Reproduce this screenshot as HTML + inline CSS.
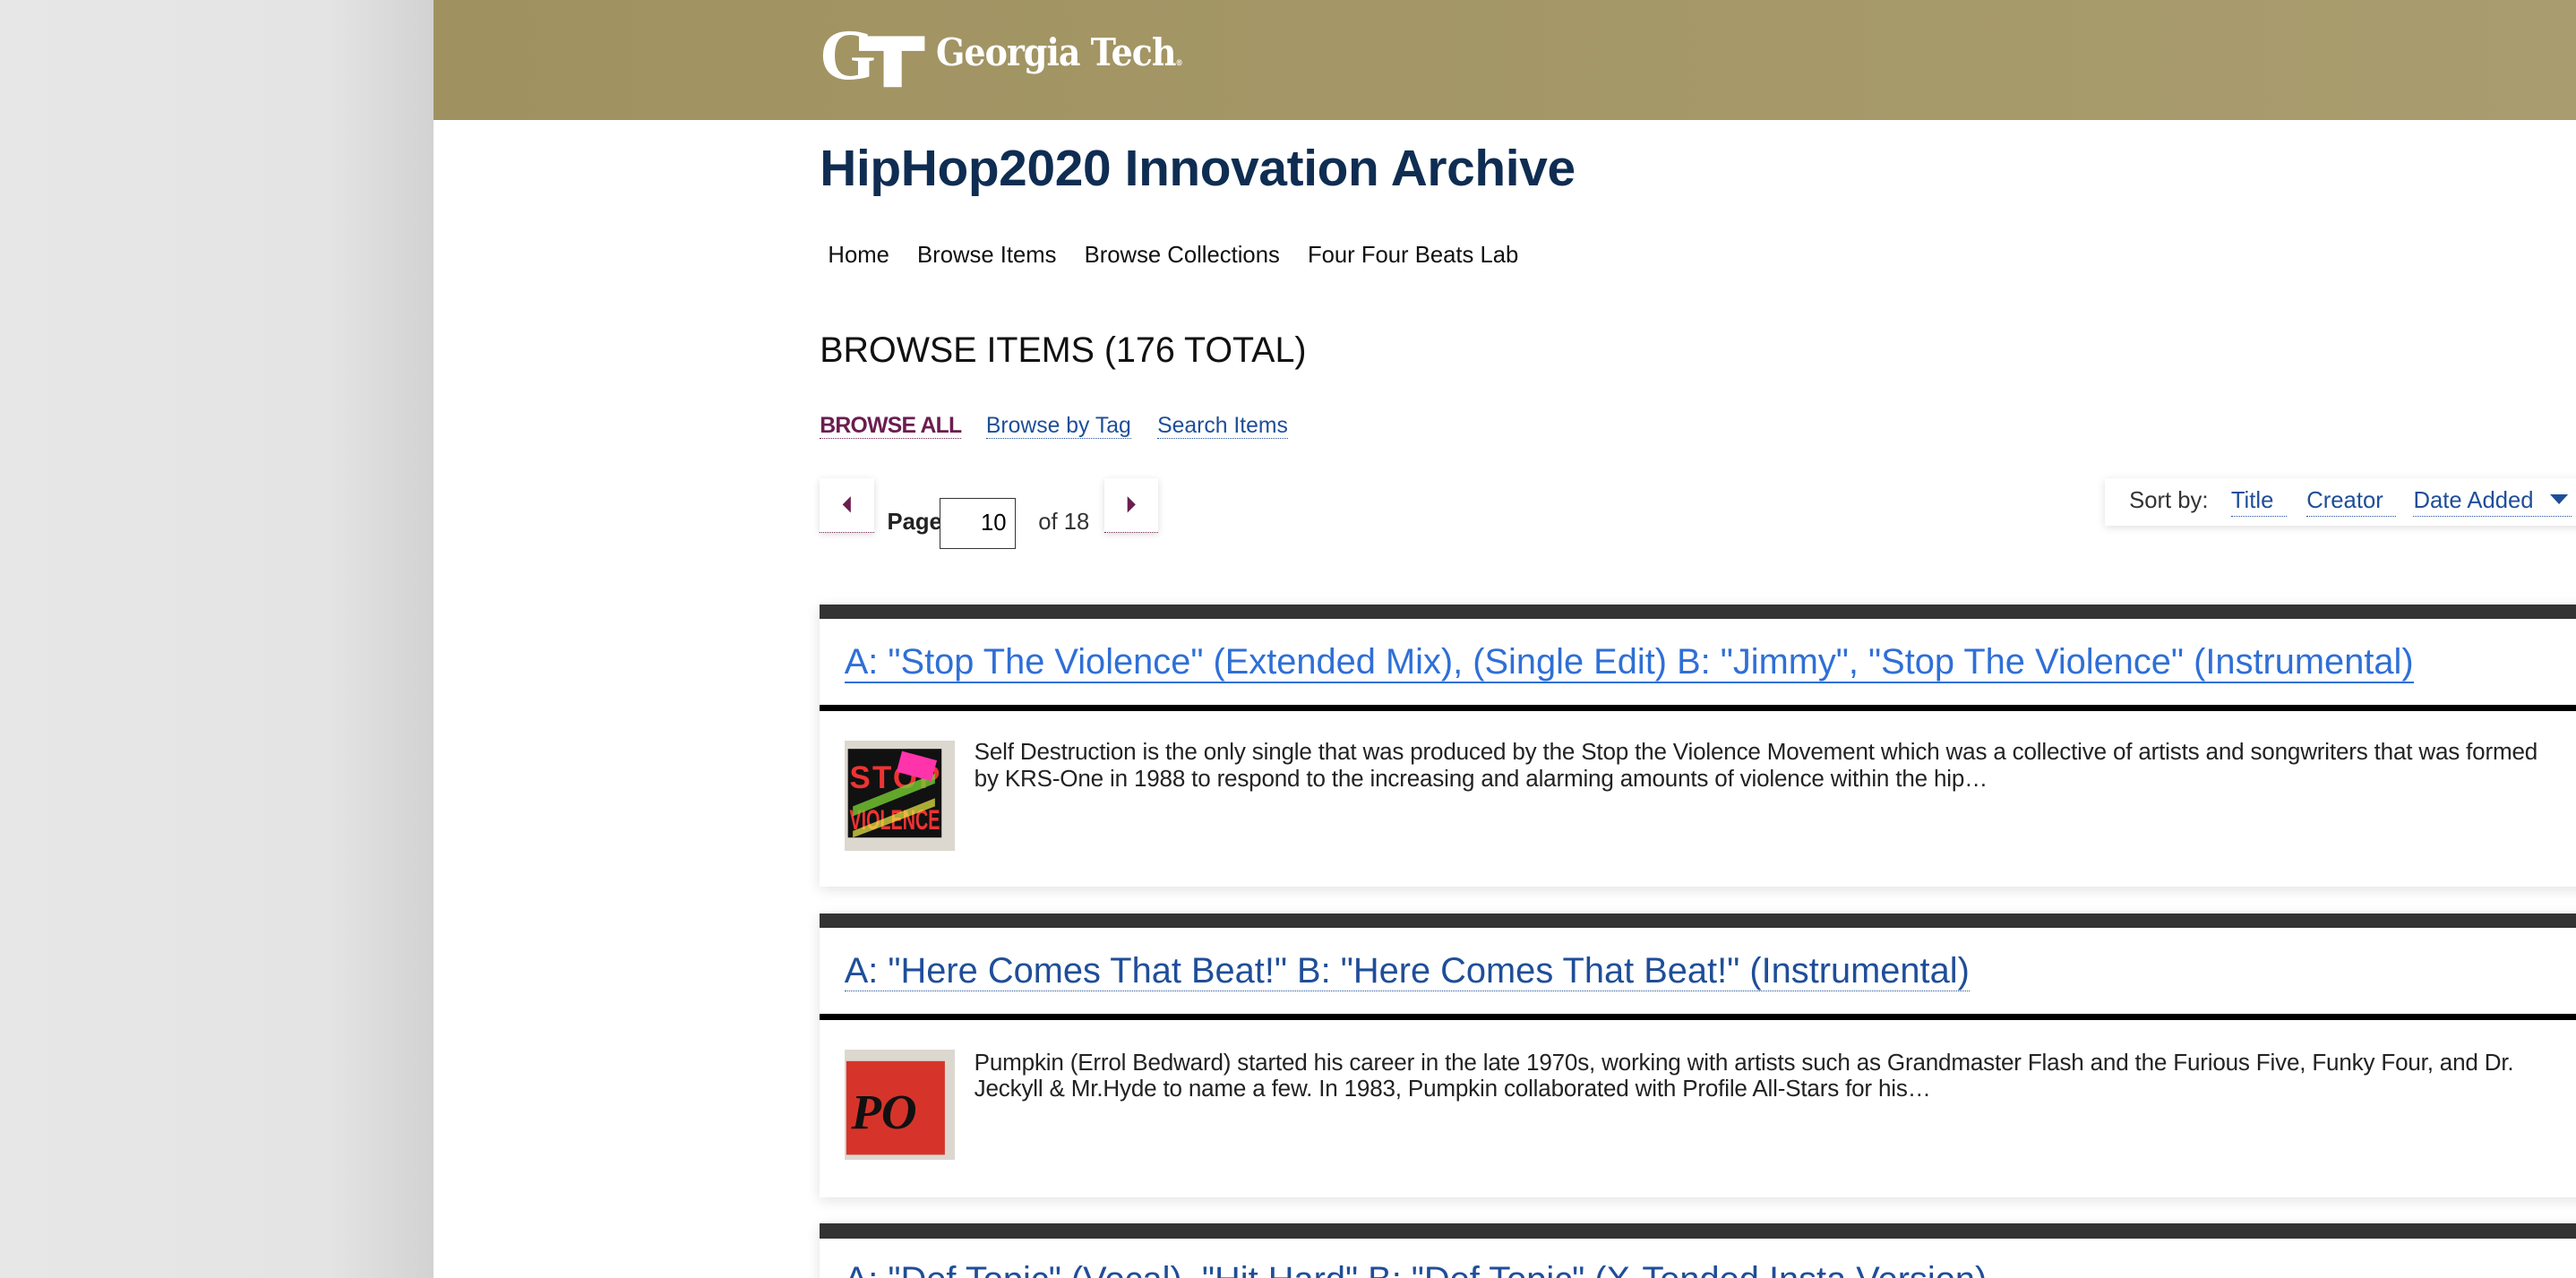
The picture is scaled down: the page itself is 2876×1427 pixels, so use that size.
<!DOCTYPE html>
<html><head><meta charset="utf-8">
<style>
html,body{margin:0;padding:0;overflow:hidden;background:#e6e6e6;}
#w{zoom:1.8342;width:1568px;height:778px;position:relative;overflow:hidden;font-family:"Liberation Sans",sans-serif;background:#e6e6e6;}
.abs{position:absolute;}
#left{left:0;top:0;width:264px;height:778px;background:linear-gradient(90deg,#e7e7e7 0,#e4e4e4 200px,#d2d2d2 264px);}
#page{left:264px;top:0;width:1304px;height:778px;background:#fff;}
#hdr{left:264px;top:0;width:1304px;height:73px;background:linear-gradient(90deg,#a09260,#a99c6e);}
a{text-decoration:none;}
.dot{border-bottom:1px dotted currentColor;}
.card{left:499px;width:1080px;background:#fff;box-shadow:0 2px 8px rgba(0,0,0,.12);}
.bar{position:absolute;left:0;right:0;top:0;height:9px;background:#333;}
.bbar{position:absolute;left:0;right:0;height:4px;background:#000;}
.ttl{position:absolute;left:15px;font-size:21.7px;white-space:nowrap;}
.txt{position:absolute;left:94px;font-size:14.2px;line-height:16px;color:#222;width:966px;letter-spacing:-0.1px;}
.img{position:absolute;left:15px;width:67px;height:67px;background:#dcd8cf;}
.btn{width:33px;height:33px;background:#fff;box-shadow:0 1px 4px rgba(0,0,0,.15);border-bottom:1px dotted #6b1d4f;}
</style></head><body><div id="w">
<div id="left" class="abs"></div>
<div id="page" class="abs"></div>
<div id="hdr" class="abs"></div>
<div class="abs" style="left:499px;top:12px;width:70px;height:44px;">
<svg width="70" height="44" viewBox="0 0 70 44"><text x="0" y="36" font-family="Liberation Serif" font-weight="bold" font-size="44" fill="#fff">G</text><path d="M24 10 H64 V19 H50 V41 H39 V19 H24 Z" fill="#fff"/></svg>
</div>
<div class="abs" style="left:570px;top:18px;color:#fff;font-family:'DejaVu Serif','Liberation Serif',serif;font-size:23px;letter-spacing:-0.6px;font-weight:bold;transform:scaleX(0.9);transform-origin:left;">Georgia Tech<span style="font-size:5px">®</span></div>
<div class="abs" style="left:499px;top:85px;color:#0f2d52;font-size:31px;font-weight:bold;letter-spacing:-0.2px;">HipHop2020 Innovation Archive</div>
<div class="abs" style="left:504px;top:148px;font-size:14px;color:#111;">
<span style="margin-right:17px">Home</span><span style="margin-right:17px">Browse Items</span><span style="margin-right:17px">Browse Collections</span><span>Four Four Beats Lab</span></div>
<div class="abs" style="left:499px;top:201px;font-size:21.5px;color:#111;">BROWSE ITEMS (176 TOTAL)</div>
<div class="abs" style="left:499px;top:252px;font-size:13.5px;">
<a class="dot" style="color:#6b1d4f;font-weight:bold;margin-right:15px;letter-spacing:-0.4px">BROWSE ALL</a><a class="dot" style="color:#1f4e99;margin-right:16px">Browse by Tag</a><a class="dot" style="color:#1f4e99">Search Items</a></div>
<div class="abs btn" style="left:499px;top:291px;"><svg width="33" height="33"><path d="M19 11 L14 16 L19 21Z" fill="#6b1d4f"/></svg></div>
<div class="abs" style="left:540px;top:310px;font-size:14px;font-weight:bold;color:#222;">Page</div>
<div class="abs" style="left:572px;top:303px;width:45px;height:30px;border:1px solid #333;background:#fff;font-size:14px;line-height:30px;text-align:right;"><span style="padding-right:5px">10</span></div>
<div class="abs" style="left:632px;top:310px;font-size:14px;color:#333;">of 18</div>
<div class="abs btn" style="left:672px;top:291px;"><svg width="33" height="33"><path d="M14 11 L19 16 L14 21Z" fill="#6b1d4f"/></svg></div>
<div class="abs" style="left:1281px;top:291px;width:300px;height:29px;background:#fff;box-shadow:0 1px 5px rgba(0,0,0,.13);font-size:14px;line-height:28px;">
<span style="position:absolute;left:15px;color:#333">Sort by:</span>
<a class="dot" style="position:absolute;left:77px;color:#1f4e99;line-height:18px;top:5px">Title&nbsp;&nbsp;</a>
<a class="dot" style="position:absolute;left:123px;color:#1f4e99;line-height:18px;top:5px">Creator&nbsp;&nbsp;</a>
<a class="dot" style="position:absolute;left:188px;color:#1f4e99;line-height:18px;top:5px">Date Added&nbsp;&nbsp;&nbsp;&nbsp;&nbsp;&nbsp;</a>
<svg style="position:absolute;left:271px;top:10px" width="12" height="8"><path d="M0 0H11L5.5 6Z" fill="#1f4e99"/></svg>
</div>
<div class="abs card" style="top:368px;height:172px;">
<div class="bar"></div>
<div class="ttl" style="top:23px;color:#2f6fd6;border-bottom:1.5px solid #2f6fd6;line-height:24px;">A: "Stop The Violence" (Extended Mix), (Single Edit) B: "Jimmy", "Stop The Violence" (Instrumental)</div>
<div class="bbar" style="top:61px"></div>
<div class="img" style="top:83px;"><svg width="67" height="67"><rect x="2" y="5" width="57" height="54" fill="#111"/><text x="3" y="29" font-size="19" font-weight="bold" fill="#e33" font-family="Liberation Sans" textLength="55">STOP</text><text x="3" y="54" font-size="17" font-weight="bold" fill="#e33" font-family="Liberation Sans" textLength="55" lengthAdjust="spacingAndGlyphs">VIOLENCE</text><path d="M5 40 L55 20 L55 26 L5 46Z" fill="#7c3" opacity=".8"/><path d="M5 55 L55 35 L55 40 L5 59Z" fill="#ee4" opacity=".7"/><rect x="33" y="9" width="22" height="13" fill="#f3a" transform="rotate(15 44 15)"/></svg></div>
<div class="txt" style="top:82px;">Self Destruction is the only single that was produced by the Stop the Violence Movement which was a collective of artists and songwriters that was formed by KRS-One in 1988 to respond to the increasing and alarming amounts of violence within the hip…</div>
</div>
<div class="abs card" style="top:556px;height:173px;">
<div class="bar"></div>
<div class="ttl" style="top:23px;color:#1f4e99;border-bottom:1px dotted #1f4e99;line-height:24px;">A: "Here Comes That Beat!" B: "Here Comes That Beat!" (Instrumental)</div>
<div class="bbar" style="top:61px"></div>
<div class="img" style="top:83px;"><svg width="67" height="67"><rect x="1" y="7" width="60" height="57" fill="#d6342a"/><text x="4" y="48" font-size="30" font-style="italic" font-weight="bold" fill="#111" font-family="Liberation Serif">PO</text></svg></div>
<div class="txt" style="top:83px;">Pumpkin (Errol Bedward) started his career in the late 1970s, working with artists such as Grandmaster Flash and the Furious Five, Funky Four, and Dr. Jeckyll &amp; Mr.Hyde to name a few. In 1983, Pumpkin collaborated with Profile All-Stars for his…</div>
</div>
<div class="abs card" style="top:745px;height:60px;">
<div class="bar"></div>
<div class="ttl" style="top:22px;color:#1f4e99;line-height:24px;">A: "Def Topic" (Vocal), "Hit Hard" B: "Def Topic" (X-Tended Insta Version)</div>
</div>
</div></body></html>
